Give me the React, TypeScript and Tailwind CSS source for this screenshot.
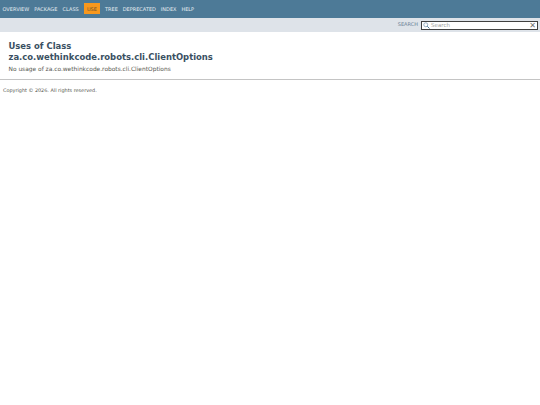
const navItems = ["OVERVIEW", "PACKAGE", "CLASS", "USE", "TREE", "DEPRECATED", "INDEX", "HELP"];

function SearchIcon() {
  return (
    <svg width="7" height="7" viewBox="0 0 14 14" fill="none" className="ml-[1px] shrink-0">
      <circle cx="5.5" cy="5.5" r="4" stroke="#7f9db5" strokeWidth="1.6" />
      <path d="M8.5 8.5L13 13" stroke="#4d7a97" strokeWidth="2" />
    </svg>
  );
}

export default function App() {
  return (
    <div className="flex h-[405px] w-[540px] flex-col overflow-hidden bg-white font-['DejaVu_Sans',sans-serif] text-[#55574f]">
      <div className="flex h-[18px] items-center bg-[#4d7a97] pb-[1px] pl-[2.5px] text-[5px] text-[#e6edf2]">
        {navItems.map((item, i) =>
          item === "USE" ? (
            <span key={item} className="mr-[5px] bg-[#f8981d] px-[3px] py-[2.5px] leading-[6px] text-[#6b5230]">
              {item}
            </span>
          ) : (
            <span key={item} className={i > 3 ? "mr-[4.9px] leading-[6px]" : "mr-[5.2px] leading-[6px]"}>
              {item}
            </span>
          ),
        )}
      </div>
      <div className="flex h-[14px] items-center justify-end bg-[#dee3e9] pr-[2px] text-[5px] text-[#6b8296]">
        <span className="mr-[3px]">SEARCH</span>
        <div className="flex h-[9px] w-[117px] items-center border border-[#404040] bg-white">
          <SearchIcon />
          <span className="ml-[1px] flex-1 text-[5.5px] leading-[7px] text-[#a0a0a0]">Search</span>
          <span className="mr-[1px] text-[8px] leading-[7px] font-bold text-[#707070]">✕</span>
        </div>
      </div>
      <div className="px-[8.5px] pt-[9px]">
        <h1 className="text-[8.45px] leading-[10.5px] font-bold text-[#3a5062]">
          Uses of Class
          <br />
          za.co.wethinkcode.robots.cli.ClientOptions
        </h1>
        <p className="mt-[3.5px] text-[5.9px] leading-[7px]">No usage of za.co.wethinkcode.robots.cli.ClientOptions</p>
      </div>
      <div className="mt-[6.5px] h-[1px] bg-[#c4c4c4]" />
      <p className="mt-[6.5px] pl-[3px] text-[4.9px] leading-[7px]">Copyright © 2026. All rights reserved.</p>
    </div>
  );
}
